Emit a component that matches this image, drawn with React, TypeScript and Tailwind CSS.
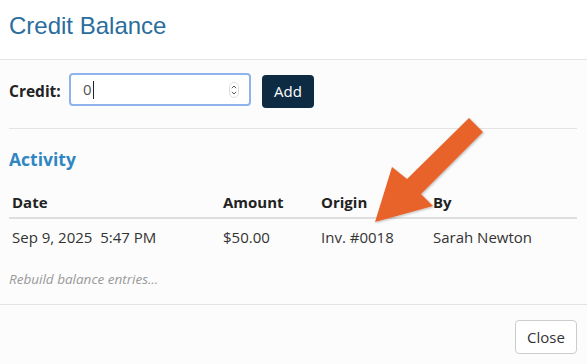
export default function App() {
  return (
    <div className="relative w-[587px] h-[364px] bg-[#fcfcfc] font-['Open_Sans',sans-serif] text-[#333] overflow-hidden">
      {/* Header */}
      <div className="h-[60px] bg-white border-b border-[#e3e3e3] flex items-center px-[9px]">
        <h1 className="font-['Liberation_Sans',Arial,sans-serif] text-[24px] leading-none text-[#2b6d9c] -mt-[8px]">
          Credit Balance
        </h1>
      </div>

      {/* Body */}
      <div className="px-[9px] pt-[13px]">
        <div className="flex items-start pb-[20px] border-b border-[#e3e3e3] mr-[1px]">
          <span className="text-[15.5px] font-bold text-[#222] mt-[7px] w-[60px]">Credit:</span>
          <div className="w-[182px] h-[33px] rounded-[4px] border-2 border-[#8fb3ec] bg-white flex items-center pl-[12px] pr-[10px]">
            <span className="text-[15px] text-[#555]">0</span>
            <span className="w-px h-[18px] bg-[#222] ml-[1px]" />
            <svg className="ml-auto" width="10" height="16" viewBox="0 0 10 16">
              <rect x="0.5" y="0.5" width="9" height="15" rx="4.5" fill="#fff" stroke="#ddd" />
              <path d="M2.8 6.2 L5 4 L7.2 6.2" fill="none" stroke="#555" strokeWidth="1" />
              <path d="M2.8 9.8 L5 12 L7.2 9.8" fill="none" stroke="#555" strokeWidth="1" />
            </svg>
          </div>
          <button className="ml-[11px] mt-[2px] w-[52px] h-[33px] rounded-[4px] bg-[#0d2b42] text-white text-[15px]">
            Add
          </button>
        </div>

        <h2 className="mt-[19px] text-[17.5px] font-bold text-[#2f86c3] leading-[22px]">Activity</h2>

        <div className="mt-[22px] mr-[1px]">
          <div className="grid grid-cols-[211px_98px_112px_1fr] border-b-2 border-[#dedede] pb-[5px] text-[15px] font-bold text-[#222] leading-[20px]">
            <div className="pl-[3px]">Date</div>
            <div className="pl-[3px]">Amount</div>
            <div className="pl-[3px]">Origin</div>
            <div className="pl-[3px]">By</div>
          </div>
          <div className="grid grid-cols-[211px_98px_112px_1fr] pt-[8px] text-[15px] text-[#333] leading-[20px]">
            <div className="pl-[3px] whitespace-pre">Sep 9, 2025  5:47 PM</div>
            <div className="pl-[3px]">$50.00</div>
            <div className="pl-[3px]">Inv. #0018</div>
            <div className="pl-[3px]">Sarah Newton</div>
          </div>
        </div>

        <p className="mt-[24px] text-[13.5px] italic text-[#999] leading-[16px]">Rebuild balance entries...</p>
      </div>

      {/* Footer */}
      <div className="absolute left-0 right-0 top-[304px] border-t border-[#e3e3e3] flex justify-end px-[10px] pt-[15px]">
        <button className="w-[62px] h-[34px] rounded-[4px] border border-[#ccc] bg-white text-[15px] text-[#333]">
          Close
        </button>
      </div>

      {/* Annotation arrow */}
      <svg className="absolute left-0 top-0 pointer-events-none" width="587" height="364">
        <defs>
          <filter id="sh" x="-20%" y="-20%" width="140%" height="140%">
            <feDropShadow dx="1" dy="1" stdDeviation="1.2" floodColor="#000" floodOpacity="0.25" />
          </filter>
        </defs>
        <polygon
          points="375,222 392,167 407,179 469,118 483,132 421,194 433,206"
          fill="#e8632b"
          filter="url(#sh)"
        />
      </svg>
    </div>
  );
}
